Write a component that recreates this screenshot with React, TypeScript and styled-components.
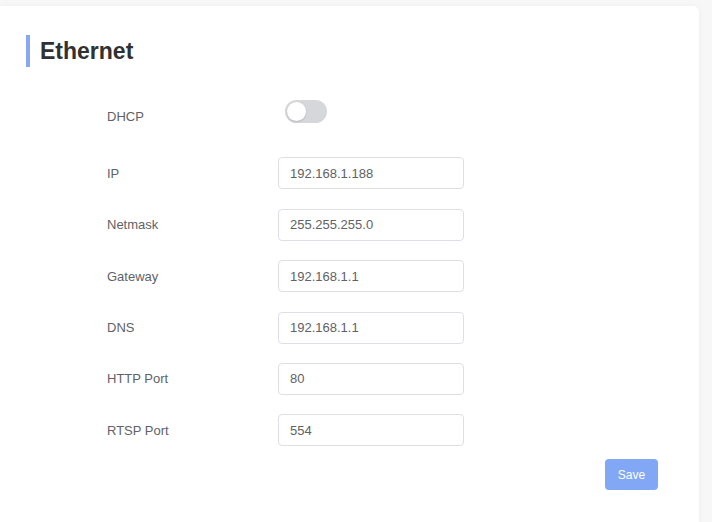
import React from "react";
import styled, { createGlobalStyle } from "styled-components";

const Global = createGlobalStyle`
  html, body { margin: 0; padding: 0; background: #f7f7f8; }
  body { font-family: "Liberation Sans", Arial, sans-serif; }
  * { box-sizing: border-box; }
`;

const Page = styled.div`
  width: 712px;
  height: 522px;
  padding: 6px 13px 0 0;
  overflow: hidden;
`;

const Card = styled.section`
  background: #fff;
  height: 520px;
  border-radius: 0 6px 6px 0;
  box-shadow: 0 1px 6px rgba(0, 0, 0, 0.05);
  padding: 29px 41px 0 26px;
  display: flex;
  flex-direction: column;
`;

const Title = styled.h2`
  margin: 0;
  height: 32px;
  display: flex;
  align-items: center;
  border-left: 4px solid #88a8f2;
  padding-left: 10px;
  font-size: 23px;
  font-weight: 700;
  color: #303133;
`;

const Form = styled.div`
  margin-top: 31px;
  padding-left: 81px;
  display: grid;
  grid-template-columns: 171px 186px;
  row-gap: 19.4px;
  align-items: center;
`;

const Label = styled.label<{ $shift?: number }>`
  font-size: 13px;
  color: #606266;
  transform: translateY(${(p) => p.$shift ?? 0}px);
`;

const Input = styled.input`
  width: 186px;
  height: 32px;
  border: 1px solid #dcdfe6;
  border-radius: 4px;
  padding: 0 11px;
  font-family: inherit;
  font-size: 13px;
  color: #606266;
  background: #fff;
  outline: none;
`;

const SwitchWrap = styled.div`
  height: 40px;
  display: flex;
  align-items: flex-start;
  padding: 2px 0 0 7px;
`;

const Switch = styled.span<{ $on?: boolean }>`
  width: 42px;
  height: 23px;
  border-radius: 12px;
  background: ${(p) => (p.$on ? "#409eff" : "#d6d7da")};
  position: relative;
  display: inline-block;
  &::after {
    content: "";
    position: absolute;
    top: 2px;
    left: ${(p) => (p.$on ? "21px" : "2px")};
    width: 19px;
    height: 19px;
    border-radius: 50%;
    background: #fff;
    box-shadow: 0 1px 2px rgba(0, 0, 0, 0.15);
  }
`;

const Footer = styled.div`
  display: flex;
  justify-content: flex-end;
  margin-top: 13px;
`;

const Button = styled.button`
  width: 53px;
  height: 31px;
  border: none;
  border-radius: 4px;
  background: #82a7f4;
  color: #fff;
  font-family: inherit;
  font-size: 12px;
  cursor: not-allowed;
`;

const fields = [
  { label: "IP", value: "192.168.1.188" },
  { label: "Netmask", value: "255.255.255.0" },
  { label: "Gateway", value: "192.168.1.1" },
  { label: "DNS", value: "192.168.1.1" },
  { label: "HTTP Port", value: "80" },
  { label: "RTSP Port", value: "554" },
];

export default function App() {
  return (
    <>
      <Global />
      <Page>
        <Card>
          <Title>Ethernet</Title>
          <Form>
            <Label $shift={-2}>DHCP</Label>
            <SwitchWrap>
              <Switch />
            </SwitchWrap>
            {fields.map((f) => (
              <React.Fragment key={f.label}>
                <Label>{f.label}</Label>
                <Input defaultValue={f.value} readOnly />
              </React.Fragment>
            ))}
          </Form>
          <Footer>
            <Button disabled>Save</Button>
          </Footer>
        </Card>
      </Page>
    </>
  );
}
